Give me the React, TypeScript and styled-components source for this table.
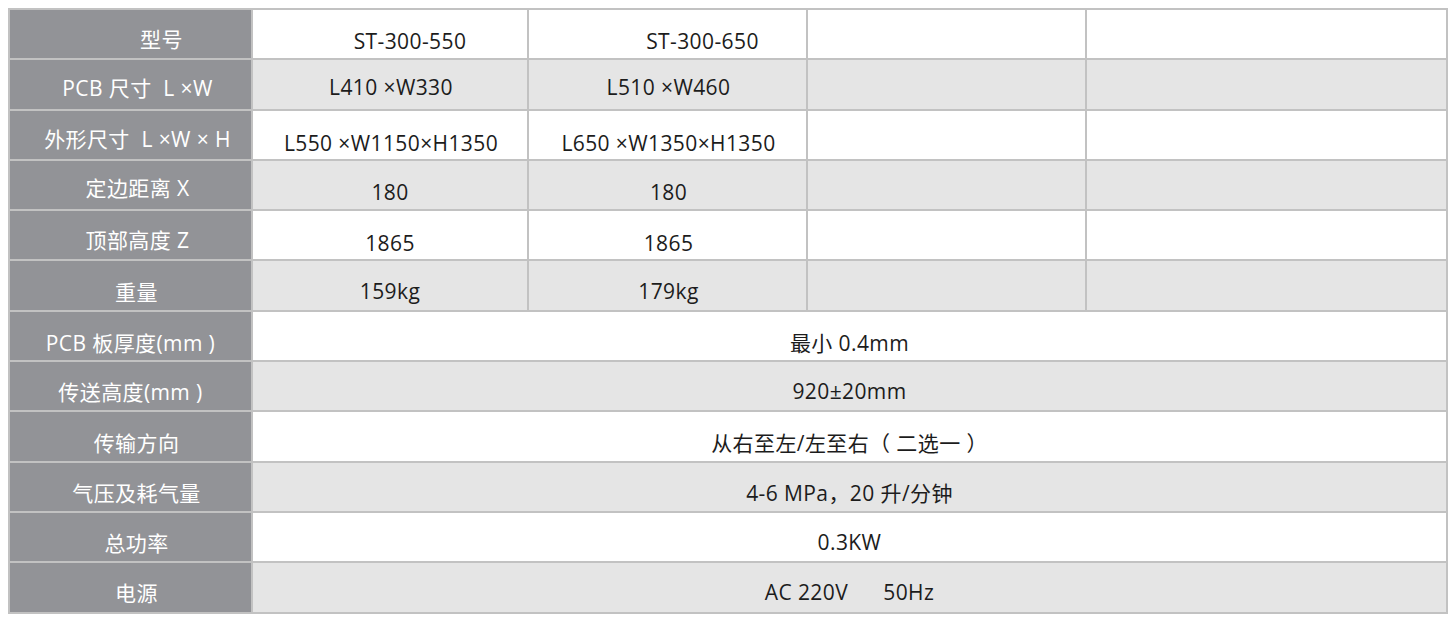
import React from "react";
import styled, { createGlobalStyle } from "styled-components";

const Global = createGlobalStyle`
  html, body { margin: 0; padding: 0; background: #ffffff; }
  body { padding: 8px; }
`;

const Table = styled.div`
  display: grid;
  grid-template-columns: 241px 274px 277px 277px 359px;
  grid-auto-rows: 48.3px;
  gap: 2px;
  width: 1440px;
  box-sizing: border-box;
  border: 2px solid #c2c2c2;
  background: #c2c2c2;
  font-family: "Open Sans", "Noto Sans CJK SC", sans-serif;
  font-size: 21px;
  letter-spacing: 0.4px;
`;

const Cell = styled.div<{ $shade?: boolean; $span?: number; $dx?: number; $dy?: number }>`
  display: flex;
  align-items: center;
  justify-content: center;
  box-sizing: border-box;
  white-space: pre;
  background: ${(p) => (p.$shade ? "#e5e5e5" : "#ffffff")};
  color: #1c1c1c;
  grid-column: span ${(p) => p.$span ?? 1};
  padding-left: ${(p) => Math.max(0, (p.$dx ?? 0) * 2)}px;
  padding-right: ${(p) => Math.max(0, -(p.$dx ?? 0) * 2)}px;
  padding-top: ${(p) => (p.$dy ?? 6) * 2}px;
`;

const Head = styled(Cell)`
  background: #929397;
  color: #ffffff;
`;

type Row = { label: string; hdx?: number; hdy?: number; values?: { t: string; dx?: number; dy?: number }[]; span?: string; sdy?: number };

const rows: Row[] = [
  { label: "型号", hdx: 31, hdy: 4, values: [{ t: "ST-300-550", dx: 20, dy: 7 }, { t: "ST-300-650", dx: 35, dy: 7 }, { t: "" }, { t: "" }] },
  { label: "PCB 尺寸  L ×W", hdx: 7, hdy: 3, values: [{ t: "L410 ×W330", dx: 1, dy: 3 }, { t: "L510 ×W460", dx: 1, dy: 3 }, { t: "" }, { t: "" }] },
  { label: "外形尺寸  L ×W × H", hdx: 7, hdy: 3, values: [{ t: "L550 ×W1150×H1350", dx: 1, dy: 8 }, { t: "L650 ×W1350×H1350", dx: 1, dy: 8 }, { t: "" }, { t: "" }] },
  { label: "定边距离 X", hdx: 7, hdy: 2, values: [{ t: "180", dx: 0, dy: 7 }, { t: "180", dx: 1, dy: 7 }, { t: "" }, { t: "" }] },
  { label: "顶部高度 Z", hdx: 7, hdy: 4, values: [{ t: "1865", dx: 0, dy: 8 }, { t: "1865", dx: 1, dy: 8 }, { t: "" }, { t: "" }] },
  { label: "重量", hdx: 6, hdy: 5, values: [{ t: "159kg", dx: 0, dy: 5 }, { t: "179kg", dx: 1, dy: 5 }, { t: "" }, { t: "" }] },
  { label: "PCB 板厚度(mm )", hdx: 0, hdy: 6, span: "最小 0.4mm", sdy: 6 },
  { label: "传送高度(mm )", hdx: 0, hdy: 5, span: "920±20mm", sdy: 5 },
  { label: "传输方向", hdx: 6, hdy: 5, span: "从右至左/左至右（ 二选一 ）", sdy: 5 },
  { label: "气压及耗气量", hdx: 6, hdy: 5, span: "4-6 MPa，20 升/分钟", sdy: 5 },
  { label: "总功率", hdx: 6, hdy: 5, span: "0.3KW", sdy: 5 },
  { label: "电源", hdx: 6, hdy: 5, span: "AC 220V      50Hz", sdy: 5 },
];

export default function App() {
  return (
    <>
      <Global />
      <Table>
        {rows.map((r, i) => {
          const shade = i % 2 === 1;
          return (
            <React.Fragment key={i}>
              <Head $dx={r.hdx} $dy={r.hdy}>{r.label}</Head>
              {r.values
                ? r.values.map((v, j) => (
                    <Cell key={j} $shade={shade} $dx={v.dx} $dy={v.dy}>
                      {v.t}
                    </Cell>
                  ))
                : (
                    <Cell $shade={shade} $span={4} $dy={r.sdy}>
                      {r.span}
                    </Cell>
                  )}
            </React.Fragment>
          );
        })}
      </Table>
    </>
  );
}
